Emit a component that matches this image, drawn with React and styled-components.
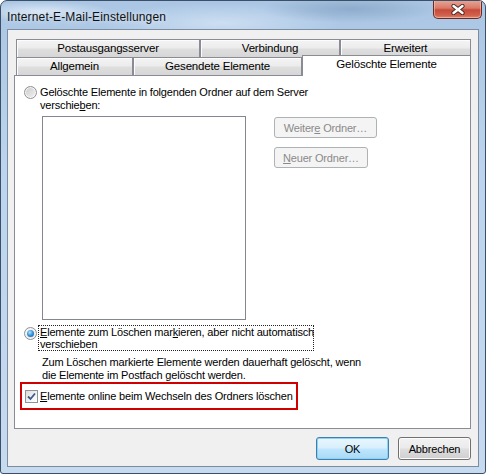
import React from 'react';
import styled, { createGlobalStyle } from 'styled-components';

const GlobalStyle = createGlobalStyle`
  html, body {
    margin: 0;
    padding: 0;
    background: #ffffff;
  }
  body {
    font-family: "Liberation Sans", Arial, sans-serif;
    font-size: 11px;
    color: #000;
    letter-spacing: -0.18px;
  }
`;

const Frame = styled.div`
  width: 486px;
  height: 474px;
  box-sizing: border-box;
  border: 1px solid #3b4f66;
  border-radius: 7px 7px 3px 3px;
  display: flex;
  flex-direction: column;
  overflow: hidden;
  background:
    radial-gradient(ellipse 90px 14px at 350px 8px, rgba(120, 150, 185, 0.55), transparent),
    radial-gradient(ellipse 70px 10px at 40px 10px, rgba(235, 243, 252, 0.7), transparent),
    radial-gradient(ellipse 120px 20px at 220px 22px, rgba(225, 237, 250, 0.6), transparent),
    linear-gradient(180deg, #aac6e4 0%, #bcd4ee 35%, #c6daf0 100%);
`;

const TitleBar = styled.div`
  height: 28px;
  flex: none;
  display: flex;
  justify-content: space-between;
  align-items: flex-start;
`;

const Caption = styled.div`
  padding: 9px 0 0 6px;
  font-size: 12px;
  letter-spacing: 0.15px;
  line-height: 14px;
  color: #111;
  text-shadow: 0 0 6px rgba(255, 255, 255, 0.9);
`;

const CloseButton = styled.div`
  width: 49px;
  height: 19px;
  margin: -1px 3px 0 0;
  box-sizing: border-box;
  border: 1px solid #6b2a22;
  border-top: none;
  border-radius: 0 0 5px 5px;
  display: flex;
  align-items: center;
  justify-content: center;
  background: linear-gradient(180deg, #e9a89a 0%, #d97a67 45%, #c8493a 55%, #d0614d 85%, #e08a70 100%);
  box-shadow: inset 0 0 0 1px rgba(255, 210, 200, 0.5);
`;

const Client = styled.div`
  flex: 1;
  margin: 0 6px 6px;
  border: 1px solid #7e8ca0;
  background: #f0f0f0;
  display: flex;
  flex-direction: column;
  padding: 9px 7px 6px 6px;
  min-height: 0;
`;

const TabRow = styled.div`
  display: flex;
  align-items: flex-start;
  height: 18px;
  margin-left: 2px;
  flex: none;
`;

const Tab = styled.div`
  width: ${p => p.$w}px;
  height: ${p => (p.$active ? 21 : 18)}px;
  margin-top: ${p => (p.$active ? -2 : 0)}px;
  box-sizing: border-box;
  border: 1px solid #898c95;
  border-bottom: none;
  padding-top: 2px;
  line-height: 13px;
  font-size: 11.5px;
  text-align: center;
  white-space: nowrap;
  background: ${p =>
    p.$active
      ? '#ffffff'
      : 'linear-gradient(180deg, #f4f4f4 0%, #ececec 45%, #dedede 55%, #d6d6d6 100%)'};
  box-shadow: ${p => (p.$active ? 'none' : 'inset 1px 1px 0 #fcfcfc')};
  position: ${p => (p.$active ? 'relative' : 'static')};
  z-index: ${p => (p.$active ? 1 : 'auto')};
`;

const Panel = styled.div`
  flex: 1;
  min-height: 0;
  border: 1px solid #898c95;
  background: #ffffff;
  padding: 10px 0 0 9px;
  display: flex;
  flex-direction: column;
  align-items: flex-start;
`;

const OptionRow = styled.div`
  display: flex;
  align-items: flex-start;
  gap: 3px;
  margin-top: ${p => p.$gap || 0}px;
`;

const OptionText = styled.div`
  white-space: nowrap;
  line-height: ${p => (p.$focused ? 12 : 13)}px;
  box-sizing: border-box;
  width: ${p => (p.$w ? `${p.$w}px` : 'auto')};
  padding: ${p => (p.$focused ? '0 0 0 1px' : '0')};
  margin: ${p => (p.$focused ? '-1px 0 0 -2px' : '0')};
  border: ${p => (p.$focused ? '1px dotted #222' : 'none')};
`;

const Radio = styled.span`
  flex: none;
  width: 13px;
  height: 13px;
  margin-top: ${p => p.$top || 0}px;
  box-sizing: border-box;
  border-radius: 50%;
  border: 1px solid #8e9194;
  background: ${p =>
    p.$checked
      ? 'radial-gradient(circle at 40% 35%, #ffffff 0%, #f0f0f0 45%, #d6d6d6 100%)'
      : 'linear-gradient(135deg, #c9c9c9 0%, #dedede 50%, #f3f3f3 100%)'};
  box-shadow: inset 0 0 0 1px #f6f6f6;
  display: flex;
  align-items: center;
  justify-content: center;

  &::after {
    content: '';
    display: ${p => (p.$checked ? 'block' : 'none')};
    width: 7px;
    height: 7px;
    border-radius: 50%;
    background: radial-gradient(circle at 40% 35%, #b8e4ff 0%, #3c98dc 45%, #0f4f96 100%);
  }
`;

const Check = styled.span`
  flex: none;
  width: 13px;
  height: 13px;
  box-sizing: border-box;
  border: 1px solid #8f9398;
  background: linear-gradient(135deg, #dcdcdc 0%, #f4f4f4 60%, #ffffff 100%);
  display: flex;
  align-items: center;
  justify-content: center;
`;

const ListArea = styled.div`
  display: flex;
  align-items: flex-start;
  margin: 4px 0 0 18px;
`;

const ListBox = styled.div`
  width: 204px;
  height: 204px;
  box-sizing: border-box;
  border: 1px solid #828790;
  background: #ffffff;
  flex: none;
`;

const ButtonColumn = styled.div`
  display: flex;
  flex-direction: column;
  align-items: flex-start;
  gap: 9px;
  margin: 1px 0 0 28px;
`;

const Button = styled.div`
  width: ${p => p.$w}px;
  height: ${p => p.$h || 21}px;
  box-sizing: border-box;
  border-radius: 3px;
  display: flex;
  align-items: center;
  justify-content: center;
  white-space: nowrap;
  color: ${p => (p.$disabled ? '#8a8a8a' : '#000')};
  border: 1px solid ${p => (p.$disabled ? '#adb2b5' : p.$default ? '#3c7fb1' : '#707070')};
  background: ${p =>
    p.$disabled
      ? '#f4f4f4'
      : p.$default
      ? 'linear-gradient(180deg, #eaf6fd 0%, #d9f0fc 45%, #bee6fd 55%, #a7d9f5 100%)'
      : 'linear-gradient(180deg, #f2f2f2 0%, #ebebeb 45%, #dddddd 55%, #cfcfcf 100%)'};
  box-shadow: ${p =>
    p.$disabled
      ? 'none'
      : p.$default
      ? 'inset 0 0 0 1px #8fd1f5'
      : 'inset 0 0 0 1px #fcfcfc'};
`;

const Note = styled.div`
  white-space: nowrap;
  margin: 5px 0 0 18px;
  line-height: 13px;
`;

const Highlight = styled.div`
  width: 278px;
  height: 28px;
  box-sizing: border-box;
  margin: 0 0 0 -4px;
  border: 2px solid #d10000;
  padding: 0 0 0 3px;
  display: flex;
  align-items: center;
  gap: 2px;
  white-space: nowrap;
`;

const Footer = styled.div`
  flex: none;
  display: flex;
  justify-content: flex-end;
  gap: 9px;
  margin-top: 8px;
`;

const Key = styled.u`
  text-decoration: underline;
  text-underline-offset: 1px;
`;

function CloseGlyph() {
  return (
    <svg width="16" height="11" viewBox="0 0 16 11">
      <path d="M3.5 2 L12.5 9 M12.5 2 L3.5 9" stroke="#4a2a24" strokeWidth="4.2" strokeLinecap="round" />
      <path d="M3.5 2 L12.5 9 M12.5 2 L3.5 9" stroke="#ffffff" strokeWidth="2.4" strokeLinecap="round" />
    </svg>
  );
}

function CheckGlyph() {
  return (
    <svg width="9" height="9" viewBox="0 0 9 9">
      <path d="M1 4.5 L3.5 7 L8 1.5" fill="none" stroke="#3d5a8a" strokeWidth="1.8" />
    </svg>
  );
}

export default function App() {
  return (
    <>
      <GlobalStyle />
      <Frame>
        <TitleBar>
          <Caption>Internet-E-Mail-Einstellungen</Caption>
          <CloseButton>
            <CloseGlyph />
          </CloseButton>
        </TitleBar>
        <Client>
          <TabRow>
            <Tab $w={184}>Postausgangsserver</Tab>
            <Tab $w={140}>Verbindung</Tab>
            <Tab $w={131}>Erweitert</Tab>
          </TabRow>
          <TabRow>
            <Tab $w={117}>Allgemein</Tab>
            <Tab $w={169}>Gesendete Elemente</Tab>
            <Tab $w={169} $active>Gelöschte Elemente</Tab>
          </TabRow>
          <Panel>
            <OptionRow>
              <Radio />
              <OptionText>
                Gelöschte Elemente in folgenden Ordner auf dem Server
                <br />
                verschie<Key>b</Key>en:
              </OptionText>
            </OptionRow>
            <ListArea>
              <ListBox />
              <ButtonColumn>
                <Button $w={103} $disabled>
                  Weiter<Key>e</Key>&nbsp;Ordner…
                </Button>
                <Button $w={94} $disabled>
                  <Key>N</Key>euer Ordner…
                </Button>
              </ButtonColumn>
            </ListArea>
            <OptionRow $gap={6}>
              <Radio $checked $top={1} />
              <OptionText $focused $w={276}>
                <Key>E</Key>lemente zum Löschen mar<Key>k</Key>ieren, aber nicht automatisch
                <br />
                verschieben
              </OptionText>
            </OptionRow>
            <Note>
              Zum Löschen markierte Elemente werden dauerhaft gelöscht, wenn
              <br />
              die Elemente im Postfach gelöscht werden.
            </Note>
            <Highlight>
              <Check>
                <CheckGlyph />
              </Check>
              <span>
                <Key>E</Key>lemente online beim Wechseln des Ordners löschen
              </span>
            </Highlight>
          </Panel>
          <Footer>
            <Button $w={73} $h={23} $default>OK</Button>
            <Button $w={73} $h={23}>Abbrechen</Button>
          </Footer>
        </Client>
      </Frame>
    </>
  );
}
